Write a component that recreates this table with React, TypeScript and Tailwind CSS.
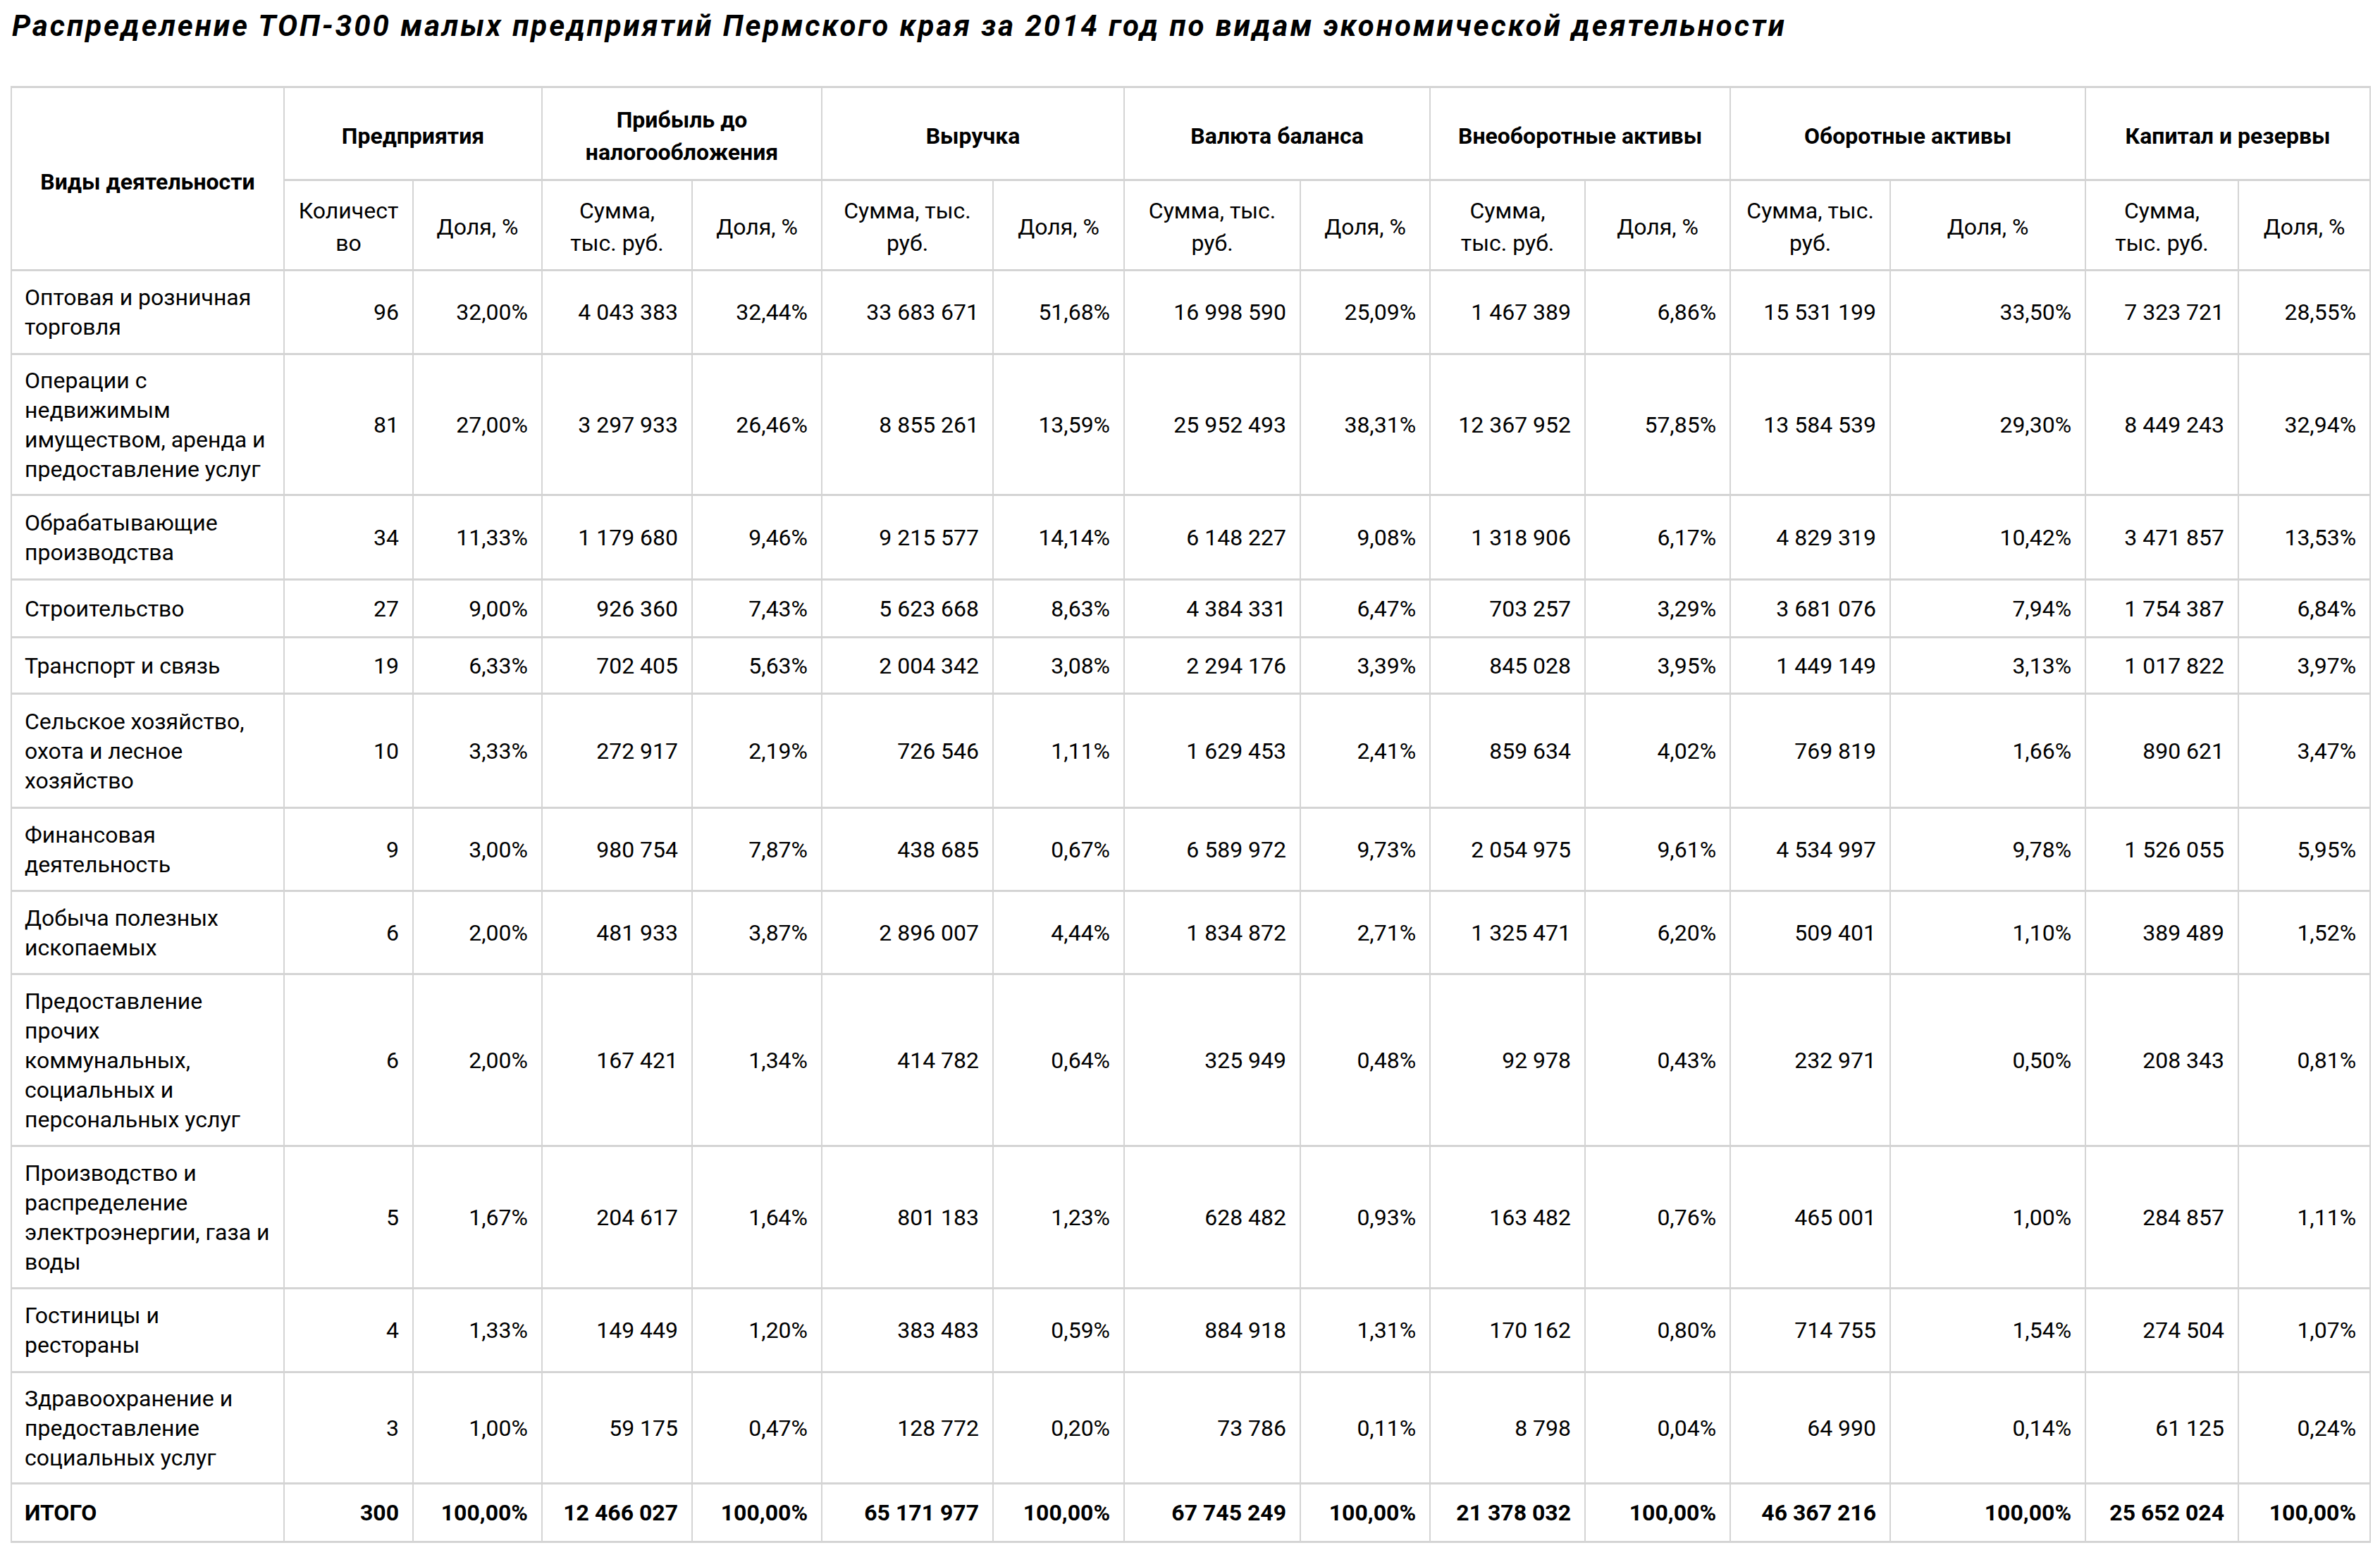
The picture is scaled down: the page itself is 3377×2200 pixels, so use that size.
import React from 'react';

const cols = ['w-[387px]', 'w-[183px]', 'w-[183px]', 'w-[213px]', 'w-[184px]', 'w-[243px]', 'w-[186px]', 'w-[250px]', 'w-[184px]', 'w-[220px]', 'w-[206px]', 'w-[227px]', 'w-[277px]', 'w-[217px]', 'w-[187px]'];

const groups = [
  ['Предприятия'],
  ['Прибыль до', 'налогообложения'],
  ['Выручка'],
  ['Валюта баланса'],
  ['Внеоборотные активы'],
  ['Оборотные активы'],
  ['Капитал и резервы'],
];

const subs = [
  ['Количест', 'во'],
  ['Доля, %'],
  ['Сумма,', 'тыс. руб.'],
  ['Доля, %'],
  ['Сумма, тыс.', 'руб.'],
  ['Доля, %'],
  ['Сумма, тыс.', 'руб.'],
  ['Доля, %'],
  ['Сумма,', 'тыс. руб.'],
  ['Доля, %'],
  ['Сумма, тыс.', 'руб.'],
  ['Доля, %'],
  ['Сумма,', 'тыс. руб.'],
  ['Доля, %'],
];

const rows: { h: string; label: string[]; v: string[] }[] = [
  { h: 'h-[119px]', label: ['Оптовая и розничная', 'торговля'], v: ['96', '32,00%', '4 043 383', '32,44%', '33 683 671', '51,68%', '16 998 590', '25,09%', '1 467 389', '6,86%', '15 531 199', '33,50%', '7 323 721', '28,55%'] },
  { h: 'h-[200px]', label: ['Операции с', 'недвижимым', 'имуществом, аренда и', 'предоставление услуг'], v: ['81', '27,00%', '3 297 933', '26,46%', '8 855 261', '13,59%', '25 952 493', '38,31%', '12 367 952', '57,85%', '13 584 539', '29,30%', '8 449 243', '32,94%'] },
  { h: 'h-[120px]', label: ['Обрабатывающие', 'производства'], v: ['34', '11,33%', '1 179 680', '9,46%', '9 215 577', '14,14%', '6 148 227', '9,08%', '1 318 906', '6,17%', '4 829 319', '10,42%', '3 471 857', '13,53%'] },
  { h: 'h-[82px]', label: ['Строительство'], v: ['27', '9,00%', '926 360', '7,43%', '5 623 668', '8,63%', '4 384 331', '6,47%', '703 257', '3,29%', '3 681 076', '7,94%', '1 754 387', '6,84%'] },
  { h: 'h-[80px]', label: ['Транспорт и связь'], v: ['19', '6,33%', '702 405', '5,63%', '2 004 342', '3,08%', '2 294 176', '3,39%', '845 028', '3,95%', '1 449 149', '3,13%', '1 017 822', '3,97%'] },
  { h: 'h-[162px]', label: ['Сельское хозяйство,', 'охота и лесное', 'хозяйство'], v: ['10', '3,33%', '272 917', '2,19%', '726 546', '1,11%', '1 629 453', '2,41%', '859 634', '4,02%', '769 819', '1,66%', '890 621', '3,47%'] },
  { h: 'h-[118px]', label: ['Финансовая', 'деятельность'], v: ['9', '3,00%', '980 754', '7,87%', '438 685', '0,67%', '6 589 972', '9,73%', '2 054 975', '9,61%', '4 534 997', '9,78%', '1 526 055', '5,95%'] },
  { h: 'h-[118px]', label: ['Добыча полезных', 'ископаемых'], v: ['6', '2,00%', '481 933', '3,87%', '2 896 007', '4,44%', '1 834 872', '2,71%', '1 325 471', '6,20%', '509 401', '1,10%', '389 489', '1,52%'] },
  { h: 'h-[244px]', label: ['Предоставление', 'прочих', 'коммунальных,', 'социальных и', 'персональных услуг'], v: ['6', '2,00%', '167 421', '1,34%', '414 782', '0,64%', '325 949', '0,48%', '92 978', '0,43%', '232 971', '0,50%', '208 343', '0,81%'] },
  { h: 'h-[202px]', label: ['Производство и', 'распределение', 'электроэнергии, газа и', 'воды'], v: ['5', '1,67%', '204 617', '1,64%', '801 183', '1,23%', '628 482', '0,93%', '163 482', '0,76%', '465 001', '1,00%', '284 857', '1,11%'] },
  { h: 'h-[119px]', label: ['Гостиницы и', 'рестораны'], v: ['4', '1,33%', '149 449', '1,20%', '383 483', '0,59%', '884 918', '1,31%', '170 162', '0,80%', '714 755', '1,54%', '274 504', '1,07%'] },
  { h: 'h-[158px]', label: ['Здравоохранение и', 'предоставление', 'социальных услуг'], v: ['3', '1,00%', '59 175', '0,47%', '128 772', '0,20%', '73 786', '0,11%', '8 798', '0,04%', '64 990', '0,14%', '61 125', '0,24%'] },
];

const total = ['300', '100,00%', '12 466 027', '100,00%', '65 171 977', '100,00%', '67 745 249', '100,00%', '21 378 032', '100,00%', '46 367 216', '100,00%', '25 652 024', '100,00%'];

const cell = 'border-x-2 border-y-[3px] border-[#d4d4d4] align-middle whitespace-nowrap';

function Lines({ lines }: { lines: string[] }) {
  return (
    <>
      {lines.map((l, i) => (
        <div key={i}>{l}</div>
      ))}
    </>
  );
}

export default function App() {
  return (
    <div className="min-h-screen bg-white text-black font-['Roboto',sans-serif]">
      <h1 className="pl-[17px] pt-[13px] text-[42px] leading-[48px] font-bold italic tracking-[3px] whitespace-nowrap">
        Распределение ТОП-300 малых предприятий Пермского края за 2014 год по видам экономической деятельности
      </h1>

      <div className="pl-[15px] pt-[61px]">
        <table className="table-fixed border-collapse w-[3347px] text-[32px]">
          <colgroup>
            {cols.map((c, i) => <col key={i} className={c} />)}
          </colgroup>
          <thead>
            <tr className="h-[132px]">
              <th rowSpan={2} className={`${cell} pt-[8px] font-bold text-center leading-[46px]`}>Виды деятельности</th>
              {groups.map((g, i) => (
                <th key={i} colSpan={2} className={`${cell} pt-[6px] font-bold text-center leading-[46px]`}>
                  <Lines lines={g} />
                </th>
              ))}
            </tr>
            <tr className="h-[128px]">
              {subs.map((s, i) => (
                <th key={i} className={`${cell} pt-[4px] font-normal text-center leading-[46px]`}>
                  <Lines lines={s} />
                </th>
              ))}
            </tr>
          </thead>
          <tbody className="leading-[42px]">
            {rows.map((r, i) => (
              <tr key={i} className={r.h}>
                <td className={`${cell} px-[18px] text-left`}>
                  <Lines lines={r.label} />
                </td>
                {r.v.map((v, j) => (
                  <td key={j} className={`${cell} pr-[19px] text-right`}>{v}</td>
                ))}
              </tr>
            ))}
            <tr className="h-[83px] font-bold">
              <td className={`${cell} px-[18px] text-left`}>ИТОГО</td>
              {total.map((v, j) => (
                <td key={j} className={`${cell} pr-[19px] text-right`}>{v}</td>
              ))}
            </tr>
          </tbody>
        </table>
      </div>
    </div>
  );
}
